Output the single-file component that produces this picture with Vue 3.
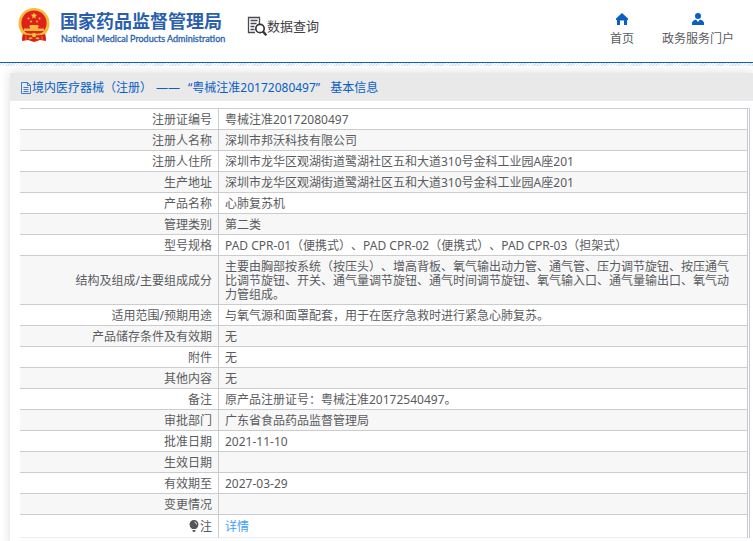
<script setup>
const rows = [
  ['注册证编号', '粤械注准20172080497'],
  ['注册人名称', '深圳市邦沃科技有限公司'],
  ['注册人住所', '深圳市龙华区观湖街道鹭湖社区五和大道310号金科工业园A座201'],
  ['生产地址', '深圳市龙华区观湖街道鹭湖社区五和大道310号金科工业园A座201'],
  ['产品名称', '心肺复苏机'],
  ['管理类别', '第二类'],
  ['型号规格', 'PAD CPR-01（便携式）、PAD CPR-02（便携式）、PAD CPR-03（担架式）'],
  ['结构及组成/主要组成成分', '主要由胸部按系统（按压头）、增高背板、氧气输出动力管、通气管、压力调节旋钮、按压通气比调节旋钮、开关、通气量调节旋钮、通气时间调节旋钮、氧气输入口、通气量输出口、氧气动力管组成。'],
  ['适用范围/预期用途', '与氧气源和面罩配套，用于在医疗急救时进行紧急心肺复苏。'],
  ['产品储存条件及有效期', '无'],
  ['附件', '无'],
  ['其他内容', '无'],
  ['备注', '原产品注册证号：粤械注准20172540497。'],
  ['审批部门', '广东省食品药品监督管理局'],
  ['批准日期', '2021-11-10'],
  ['生效日期', ''],
  ['有效期至', '2027-03-29'],
  ['变更情况', ''],
]
</script>

<template>
  <div class="page">
    <header class="header">
      <a class="brand" href="#">
        <svg class="emblem" viewBox="0 0 32 34" aria-hidden="true">
          <path d="M5 25 L4 33 L10 32 L16 34 L22 32 L28 33 L27 25Z" fill="#d71f18" />
          <circle cx="16" cy="15.5" r="15.5" fill="#f3bd3c" />
          <circle cx="16" cy="15" r="12.6" fill="#e0201b" />
          <path d="M16 4.5l.9 2.1 2.3.2-1.8 1.5.6 2.2-2-1.2-2 1.2.6-2.2-1.8-1.5 2.3-.2z" fill="#f8cf45" />
          <g fill="#f3bd38">
            <circle cx="10.5" cy="10.5" r="1" /><circle cx="13" cy="13.5" r="1" />
            <circle cx="19" cy="13.5" r="1" /><circle cx="21.5" cy="10.5" r="1" />
            <path d="M12 17h8l1 2h-1v1.500h6V23H6v-2.500h6V19h-1z" />
          </g>
          <path d="M5 24q11 4 22 0l-1 5q-10 4-20 0z" fill="#f3bd3c" />
          <path d="M5 26q5 2 9 1l2-2 2 2q4 1 9-1l1 6-5-1-4-2-3 3-3-3-4 2-5 1z" fill="#d71f18" />
          <circle cx="16" cy="27" r="2.2" fill="#f3bd38" />
          <path d="M8 28v4M24 28v4M12 29v3M20 29v3" stroke="#f0a52c" stroke-width=".7" />
        </svg>
        <span class="names">
          <span class="cn">国家药品监督管理局</span>
          <span class="en">National Medical Products Administration</span>
        </span>
      </a>
      <a class="search" href="#">
        <svg class="search-icon" viewBox="0 0 20 20" aria-hidden="true">
          <path d="M12.500 8V1.500h-11v15H8M3.500 4.500h7M3.500 7.500h6M3.500 10.500h4M3.500 13.500h4" fill="none" stroke="#4a4852" stroke-width="1.3" />
          <circle cx="13" cy="12.500" r="4.200" fill="#fff" stroke="#35333d" stroke-width="1.700" />
          <path d="M16 15.500l3.300 3.800" stroke="#35333d" stroke-width="2.500" />
        </svg>
        <span>数据查询</span>
      </a>
      <nav class="nav">
        <a href="#">
          <svg viewBox="0 0 12 12" aria-hidden="true"><path d="M6 0L0 5.500V7h1v5h3V7.500h4V12h3V7h1V5.500z" fill="#0a5fc4" /></svg>
          <span>首页</span>
        </a>
        <a href="#">
          <svg viewBox="0 0 12 12" aria-hidden="true"><circle cx="6" cy="3" r="3" fill="#0a5fc4" /><path d="M0 12V9.500q1-2.500 4-3L6 9l2-2.500q3 .5 4 3V12z" fill="#0a5fc4" /></svg>
          <span>政务服务门户</span>
        </a>
      </nav>
    </header>
    <div class="hatch"></div>
    <main class="card">
      <h1 class="title">
        <svg viewBox="0 0 10 12" aria-hidden="true"><path d="M.5.5h6l3 3v8h-9zM6.500.5v3h3M2.500 5.500h5M2.500 7.500h5M2.500 9.500h5" fill="none" stroke="#3f7ccd" /></svg>
        <span>境内医疗器械（注册）</span>
        <span class="dash">——</span>
        <span>“粤械注准20172080497”</span>
        <span class="tail">基本信息</span>
      </h1>
      <div class="body">
        <table class="info">
          <tbody>
            <tr v-for="row in rows" :key="row[0]">
              <th scope="row">{{ row[0] }}</th>
              <td>{{ row[1] }}</td>
            </tr>
            <tr class="note">
              <th scope="row">
                <svg viewBox="0 0 10 12" aria-hidden="true"><path d="M5 0a4.500 4.500 0 0 1 4.500 4.500Q9.500 7 7 9H3Q.5 7 .5 4.500A4.500 4.500 0 0 1 5 0zM3.500 10h3v1l-1 1h-1l-1-1z" fill="#55565a" /><path d="M5.500 2q2 .3 2 2.500" fill="none" stroke="#fff" stroke-width=".8" /></svg>注
              </th>
              <td><a href="#">详情</a></td>
            </tr>
          </tbody>
        </table>
      </div>
    </main>
  </div>
</template>

<style>
body {
  margin: 0;
  background: #fff;
  overflow: hidden;
}
</style>

<style scoped>
.page {
  font: 12px/14px "Noto Sans", "Noto Sans CJK SC", sans-serif;
  text-spacing-trim: space-all;
  color: #5a5b60;
}
a {
  color: inherit;
  text-decoration: none;
}
.header {
  display: flex;
  align-items: flex-start;
  height: 62px;
  border-bottom: 1px solid #0a5fc4;
}
.brand {
  display: flex;
  gap: 10px;
  padding: 8px 0 0 18px;
}
.emblem {
  width: 32px;
  height: 34px;
}
.names {
  display: flex;
  flex-direction: column;
  width: 162px;
  padding-top: 3px;
  color: #2b5fae;
  white-space: nowrap;
}
.cn {
  font-size: 18px;
  line-height: 20px;
  font-weight: 700;
}
.en {
  padding-left: 1px;
  font: 400 9px/16px Lato, sans-serif;
  -webkit-text-stroke: 0.3px;
}
.search {
  display: flex;
  align-items: center;
  padding: 15px 0 0 25px;
  font-size: 13px;
  line-height: 20px;
  color: #3f3f46;
}
.search-icon {
  width: 20px;
  height: 22px;
}
.nav {
  display: flex;
  gap: 28px;
  margin-left: auto;
  padding: 13px 19px 0 0;
}
.nav a {
  display: flex;
  flex-direction: column;
  align-items: center;
  gap: 7px;
}
.nav svg {
  width: 12px;
  height: 12px;
}
.hatch {
  height: 3px;
  background: repeating-linear-gradient(135deg, #fff 0 1px, #e2e2e2 1px 2px);
}
.card {
  margin: 7px 0 0 10px;
  box-shadow: 0 0 10px rgba(0, 0, 0, 0.14);
  background: #fff;
}
.title {
  display: flex;
  align-items: center;
  margin: 0;
  padding: 8px 11px 5px;
  background: #e9e9e9;
  border-bottom: 1px solid #e8ebf6;
  font-size: 12px;
  line-height: 14px;
  font-weight: 400;
  color: #0a5fc4;
}
.title svg {
  width: 10px;
  height: 12px;
  margin-right: 1px;
}
.dash {
  margin: 0 8px 0 4px;
}
.tail {
  margin-left: 10px;
}
.body {
  padding: 7px 3px 10px 10px;
}
.info {
  width: 100%;
  border-collapse: separate;
  border-spacing: 0;
  border-top: 1px solid #ccc;
  border-right: 3px double #c8c8d0;
}
th,
td {
  padding: 4px 6px 2px;
  border-bottom: 1px solid #ccc;
  line-height: 14px;
  font-weight: 400;
  height: 14px;
}
th {
  width: 186px;
  text-align: right;
  border-right: 1px solid #ccc;
}
td {
  text-align: left;
  padding-right: 16px;
}
tr:nth-child(even) {
  background: #f7f7f7;
}
.note th,
.note td {
  height: 16px;
  border-bottom-color: #ebebf2;
}
.note svg {
  width: 10px;
  height: 12px;
  margin-right: 1px;
  vertical-align: -1px;
}
.note a {
  color: #409eff;
}
</style>
